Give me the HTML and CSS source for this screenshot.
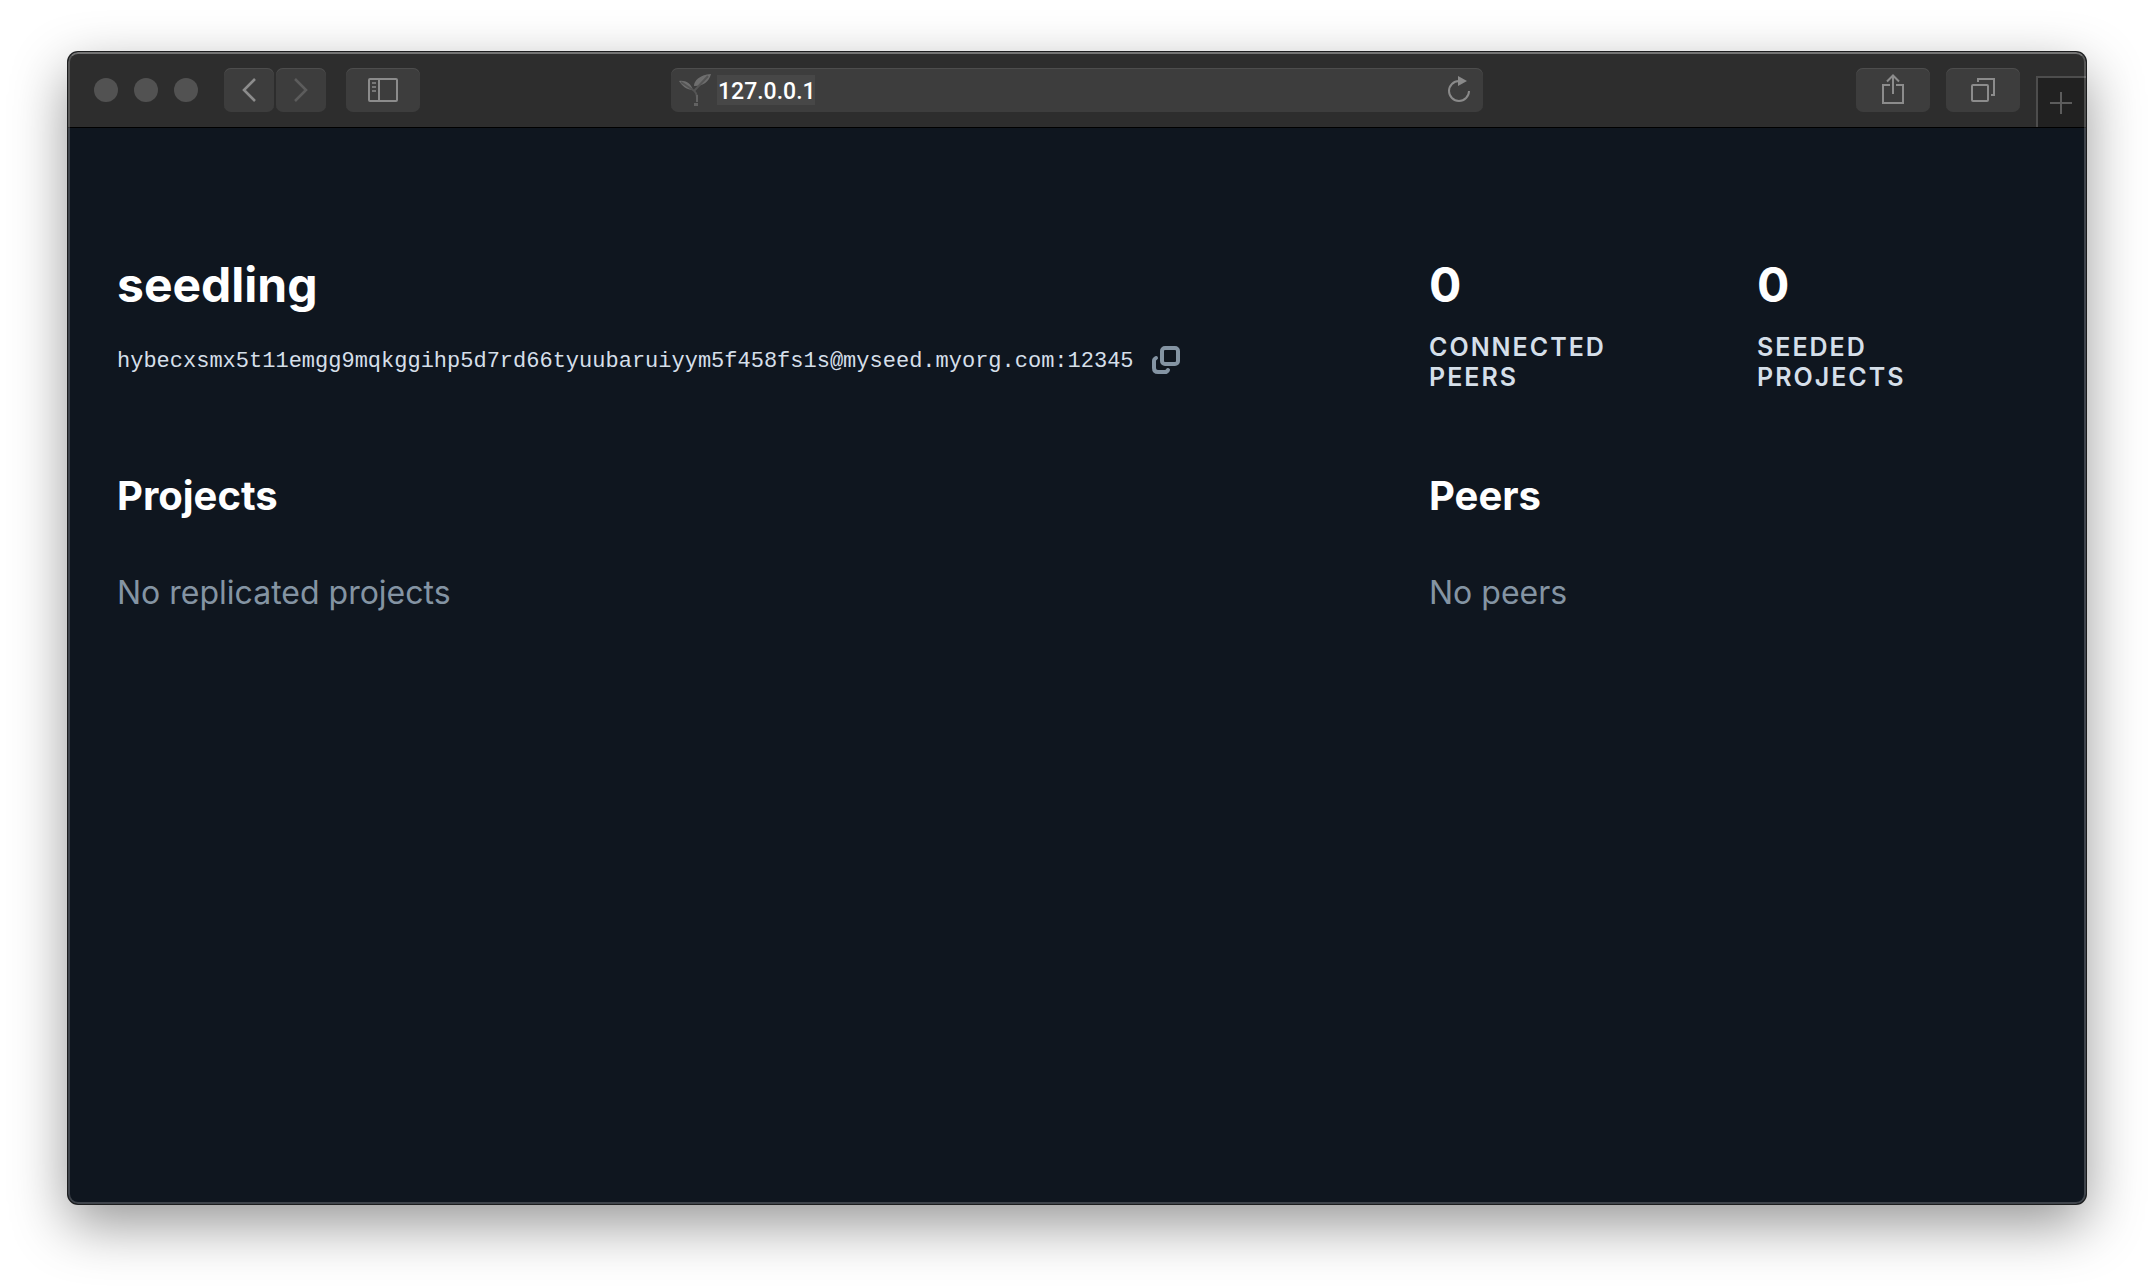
FILE: index.html
```html
<!DOCTYPE html>
<html lang="en">
<head>
<meta charset="utf-8">
<title>seedling</title>
<meta name="viewport" content="width=device-width, initial-scale=1">
<link rel="stylesheet" href="styles.css">
</head>
<body>
<div class="window">
  <header class="toolbar">
    <div class="tools">
      <div class="lights"><span class="light"></span><span class="light"></span><span class="light"></span></div>
      <div class="history">
        <button class="tool tool-small" type="button" aria-label="Back">
          <svg width="50" height="44" viewBox="0 0 50 44"><path d="M31 11 20 22l11 11" fill="none" stroke="#8c8c8c" stroke-width="2.6"/></svg>
        </button>
        <button class="tool tool-small" type="button" aria-label="Forward">
          <svg width="50" height="44" viewBox="0 0 50 44"><path d="M19 11l11 11-11 11" fill="none" stroke="#5c5c5c" stroke-width="2.6"/></svg>
        </button>
      </div>
      <button class="tool" type="button" aria-label="Sidebar">
        <svg width="74" height="44" viewBox="0 0 74 44" fill="none" stroke="#8c8c8c" stroke-width="2"><rect x="23" y="11" width="28" height="22" rx="1"/><path d="M33 11v22"/><path d="M26 15h4M26 19h4M26 23h4" stroke="#777"/></svg>
      </button>
    </div>
    <form class="address">
      <svg class="favicon" width="34" height="34" viewBox="0 0 34 34" aria-hidden="true"><path d="M2 8c6-1 12 2 14 9C10 17 5 13 2 8zM17 13c0-5 5-11 17-12-2 8-8 12-16 12z" fill="#6e6e6e"/><path d="M4 9l12 8c3 2 4 5 4 8M17 18 31 3" fill="none" stroke="#555" stroke-width="2"/><path d="M20 22v7" stroke="#626262" stroke-width="2"/><rect x="17" y="30" width="4" height="3" fill="#626262"/></svg>
      <input class="url" type="text" aria-label="Address" value="127.0.0.1">
      <button class="reload" type="button" aria-label="Reload">
        <svg width="28" height="30" viewBox="0 0 28 30"><path d="M14 6A10 10 0 1 0 24 16" fill="none" stroke="#8a8a8a" stroke-width="2"/><path d="M13 1v10l9-5z" fill="#8a8a8a"/></svg>
      </button>
    </form>
    <div class="tools tools-end">
      <button class="tool" type="button" aria-label="Share">
        <svg width="74" height="44" viewBox="0 0 74 44" fill="none" stroke="#8c8c8c" stroke-width="2"><path d="M34 17h-7v18h20V17h-7M37 26V8M31 13.500l6-6 6 6"/></svg>
      </button>
      <button class="tool" type="button" aria-label="Show tabs">
        <svg width="74" height="44" viewBox="0 0 74 44" fill="none" stroke="#8c8c8c" stroke-width="2"><rect x="26" y="17" width="16" height="16" rx="1"/><path d="M32 14v-3h16v16h-3"/></svg>
      </button>
      <button class="new-tab" type="button" aria-label="New tab">
        <svg width="22" height="22" viewBox="0 0 22 22"><path d="M11 0v22M0 11h22" stroke="#5c5c5c" stroke-width="2"/></svg>
      </button>
    </div>
  </header>
  <main class="page">
    <section class="seed">
      <h1 class="title">seedling</h1>
      <div class="seed-id">
        <span class="seed-address">hybecxsmx5t11emgg9mqkggihp5d7rd66tyuubaruiyym5f458fs1s@myseed.myorg.com:12345</span>
        <button class="copy" type="button" aria-label="Copy address">
          <svg width="28" height="28" viewBox="0 0 28 28" fill="none" stroke="#8494a3" stroke-width="4" stroke-linecap="round"><rect x="10" y="2" width="16" height="16" rx="3"/><path d="M4 12q-2 1-2 3v7q0 4 4 4h7q2 0 3-2"/></svg>
        </button>
      </div>
    </section>
    <section class="stat">
      <p class="title">0</p>
      <p class="label">Connected<br>Peers</p>
    </section>
    <section class="stat">
      <p class="title">0</p>
      <p class="label">Seeded<br>Projects</p>
    </section>
    <section class="projects">
      <h2 class="heading">Projects</h2>
      <p class="empty">No replicated projects</p>
    </section>
    <section class="peers">
      <h2 class="heading">Peers</h2>
      <p class="empty">No peers</p>
    </section>
  </main>
</div>
</body>
</html>
```
FILE: styles.css
```css
* { box-sizing: border-box; }

body {
  display: flex;
  min-height: 100vh;
  margin: 0;
  padding: 52px 68px 84px;
  background: #fff;
  font-family: Inter, sans-serif;
}

h1, h2, p { margin: 0; }

button {
  display: flex;
  align-items: center;
  justify-content: center;
  padding: 0;
  border: 0;
  background: none;
}

svg { display: block; flex: none; }

.window {
  position: relative;
  display: flex;
  flex: 1;
  flex-direction: column;
  min-width: 0;
  overflow: hidden;
  border-radius: 10px;
  background: #0f161f;
  box-shadow: 0 0 0 1px #1c1d1e, 0 20px 56px rgba(0, 0, 0, 0.42);
}

/* light rim on the window edge */
.window::after {
  content: "";
  position: absolute;
  inset: 0;
  border: 2px solid rgba(255, 255, 255, 0.2);
  border-top-color: rgba(255, 255, 255, 0.34);
  border-radius: 10px;
  pointer-events: none;
}

.toolbar {
  display: grid;
  grid-template-columns: 1fr minmax(0, 812px) 1fr;
  height: 76px;
  padding-top: 16px;
  border-bottom: 1px solid #000;
  background: #2d2d2d;
}

.tools {
  display: flex;
  align-items: flex-start;
  gap: 20px;
  padding-left: 26px;
}

.tools-end {
  justify-content: flex-end;
  gap: 16px;
  padding-left: 0;
}

.lights {
  display: flex;
  gap: 16px;
  padding: 10px 6px 0 0;
}

.light {
  width: 24px;
  height: 24px;
  border-radius: 50%;
  background: #525252;
}

.history { display: flex; gap: 2px; }

.tool {
  width: 74px;
  height: 44px;
  border-radius: 7px;
  background: #3d3d3d;
  box-shadow: inset 0 1px #4d4d4d;
}

.tool-small { width: 50px; }

.address {
  display: flex;
  align-items: center;
  gap: 6px;
  height: 44px;
  margin: 0;
  padding: 0 10px 0 6px;
  border-radius: 7px;
  background: #3d3d3d;
  box-shadow: inset 0 1px #4d4d4d;
}

.url {
  width: 98px;
  height: 30px;
  padding: 2px 0 0 1px;
  border: 0;
  background: #474747;
  color: #fff;
  font: 500 23px Roboto, sans-serif;
}

.reload { margin-left: auto; }

.new-tab {
  width: 50px;
  height: 51px;
  margin-top: 8px;
  padding-right: 2px;
  border: 2px solid #4d4d4d;
  border-width: 2px 0 0 2px;
  background: #212121;
}

.page {
  display: grid;
  grid-template-columns: repeat(6, 1fr);
  column-gap: 48px;
  padding: 127px 49px;
}

.seed, .projects { grid-column: span 4; }

.peers { grid-column: span 2; }

.title {
  color: #fff;
  font-size: 48px;
  font-weight: 700;
  line-height: 60px;
}

.seed-id {
  display: flex;
  align-items: center;
  gap: 18px;
  margin-top: 27px;
}

.seed-address {
  padding-top: 4px;
  color: #d5dfe9;
  font-family: "Liberation Mono", monospace;
  font-size: 22px;
  line-height: 32px;
}

.label {
  margin-top: 17px;
  color: #d5dfe9;
  font-size: 25px;
  font-weight: 600;
  letter-spacing: 2px;
  line-height: 30px;
  text-transform: uppercase;
}

.heading {
  margin-top: 79px;
  color: #fff;
  font-size: 40px;
  font-weight: 700;
  line-height: 50px;
}

.empty {
  margin-top: 52px;
  color: #8494a3;
  font-size: 32px;
  font-weight: 400;
  line-height: 40px;
}
```
